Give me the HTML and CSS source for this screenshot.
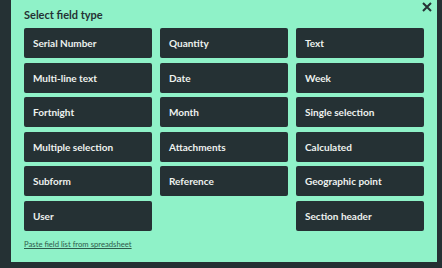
FILE: index.html
```html
<!DOCTYPE html>
<html lang="en">
<head>
  <meta charset="UTF-8">
  <title>Select field type</title>
  <link rel="stylesheet" href="styles.css">
</head>
<body>

  <div class="panel">
    <button class="close-btn" aria-label="Close">
      <svg width="10" height="10" viewBox="0 0 10 10"><path d="M1 1 L9 9 M9 1 L1 9" stroke="#253134" stroke-width="2" fill="none"/></svg>
    </button>
    <h2 class="title">Select field type</h2>

    <div class="types">
      <div class="type">Serial Number</div>
      <div class="type">Quantity</div>
      <div class="type">Text</div>
      <div class="type">Multi-line text</div>
      <div class="type">Date</div>
      <div class="type">Week</div>
      <div class="type">Fortnight</div>
      <div class="type">Month</div>
      <div class="type">Single selection</div>
      <div class="type">Multiple selection</div>
      <div class="type">Attachments</div>
      <div class="type">Calculated</div>
      <div class="type">Subform</div>
      <div class="type">Reference</div>
      <div class="type">Geographic point</div>
      <div class="type">User</div>
      <div class="type empty"></div>
      <div class="type">Section header</div>
    </div>

    <a href="#" class="paste-link">Paste field list from spreadsheet</a>
  </div>

</body>
</html>
```

FILE: styles.css
```css
body {
  margin: 0;
  padding: 0;
  background-color: #253134;
  font-family: Lato, "Open Sans", sans-serif;
}
.panel {
  position: relative;
  margin-left: 11px;
  width: 426px;
  height: 262px;
  box-sizing: border-box;
  background-color: #8ff2c8;
  padding: 8px 13px 0 13px;
}
.title {
  margin: 0 0 6px 0;
  font-size: 11px;
  font-weight: bold;
  color: #253134;
  line-height: 14px;
}
.close-btn {
  position: absolute;
  top: 2px;
  right: 5px;
  background: none;
  border: none;
  padding: 0;
  width: 10px;
  height: 10px;
  cursor: pointer;
}
.close-btn svg {
  display: block;
}
.types {
  display: grid;
  grid-template-columns: repeat(3, 128px);
  grid-auto-rows: 30px;
  column-gap: 8px;
  row-gap: 4.6px;
}
.type {
  background-color: #253134;
  color: #eef2ef;
  border-radius: 2px;
  font-size: 10px;
  font-weight: bold;
  padding-left: 9px;
  display: flex;
  align-items: center;
}
.type.empty {
  visibility: hidden;
}
.paste-link {
  display: inline-block;
  margin-top: 6px;
  font-size: 7.7px;
  color: #2f5a4c;
}
```
